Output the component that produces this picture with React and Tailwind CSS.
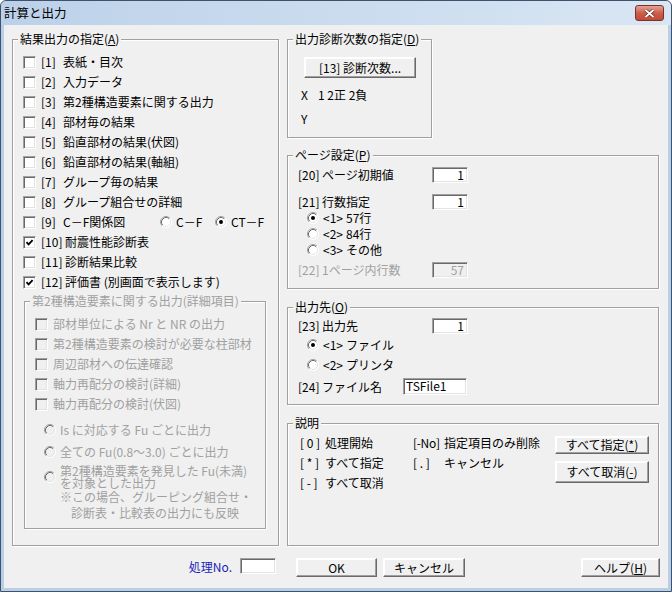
import React from "react";

const U = ({ children }) => (
  <span className="underline decoration-1 underline-offset-[1px]">{children}</span>
);

function Check({ checked, disabled }) {
  return (
    <span
      className={`relative flex items-center justify-center w-[13px] h-[13px] shrink-0 border border-t-[#a0a0a0] border-l-[#a0a0a0] border-r-white border-b-white shadow-[inset_1px_1px_0_#696969,inset_-1px_-1px_0_#e3e3e3] ${
        disabled ? "bg-[#f0f0f0]" : "bg-white"
      }`}
    >
      {checked && (
        <svg width="9" height="9" viewBox="0 0 9 9">
          <path d="M1.5 4.2 L3.6 6.4 L7.6 2.2" stroke="#000" strokeWidth="1.9" fill="none" />
        </svg>
      )}
    </span>
  );
}

function Radio({ checked, disabled }) {
  return (
    <svg width="12" height="12" viewBox="0 0 12 12" className="shrink-0">
      <circle cx="6" cy="6" r="5.5" fill={disabled ? "#f0f0f0" : "#fff"} />
      <path d="M2.11 9.89 A5.5 5.5 0 0 1 9.89 2.11" stroke="#a0a0a0" fill="none" />
      <path d="M2.82 9.18 A4.5 4.5 0 0 1 9.18 2.82" stroke="#696969" fill="none" />
      <path d="M9.89 2.11 A5.5 5.5 0 0 1 2.11 9.89" stroke="#fff" fill="none" />
      <path d="M9.18 2.82 A4.5 4.5 0 0 1 2.82 9.18" stroke="#e3e3e3" fill="none" />
      {checked && <circle cx="6" cy="6" r="2" fill="#000" />}
    </svg>
  );
}

function Btn({ className = "", children }) {
  return (
    <div
      className={`flex items-center justify-center bg-[#f0f0f0] border border-t-white border-l-white border-r-[#696969] border-b-[#696969] shadow-[inset_-1px_-1px_0_#a0a0a0,inset_1px_1px_0_#fff] leading-none whitespace-nowrap ${className}`}
    >
      {children}
    </div>
  );
}

function Field({ className = "", disabled, children }) {
  return (
    <div
      className={`h-[16px] border border-t-[#a0a0a0] border-l-[#a0a0a0] border-r-white border-b-white shadow-[inset_1px_1px_0_#696969,inset_-1px_-1px_0_#e3e3e3] leading-[14px] ${
        disabled ? "bg-[#f0f0f0] text-[#a0a0a0]" : "bg-white"
      } ${className}`}
    >
      {children}
    </div>
  );
}

function Group({ label, className = "", disabled, children }) {
  return (
    <div
      className={`relative border border-[#a0a0a0] shadow-[inset_1px_1px_0_#fff,1px_1px_0_#fff] ${className}`}
    >
      <span
        className={`absolute -top-[8px] left-[5px] px-[2px] bg-[#f0f0f0] leading-[14px] whitespace-nowrap ${
          disabled ? "text-[#a0a0a0]" : "text-black"
        }`}
      >
        {label}
      </span>
      {children}
    </div>
  );
}

const mainItems = [
  ["[1]", "表紙・目次"],
  ["[2]", "入力データ"],
  ["[3]", "第2種構造要素に関する出力"],
  ["[4]", "部材毎の結果"],
  ["[5]", "鉛直部材の結果(伏図)"],
  ["[6]", "鉛直部材の結果(軸組)"],
  ["[7]", "グループ毎の結果"],
  ["[8]", "グループ組合せの詳細"],
];

const lateItems = [
  ["[10]", "耐震性能診断表", true],
  ["[11]", "診断結果比較", false],
  ["[12]", "評価書 (別画面で表示します)", true],
];

const detailItems = [
  "部材単位による Nr と NR の出力",
  "第2種構造要素の検討が必要な柱部材",
  "周辺部材への伝達確認",
  "軸力再配分の検討(詳細)",
  "軸力再配分の検討(伏図)",
];

function Pre({ w, children }) {
  return <span className={`shrink-0 whitespace-nowrap ${w}`}>{children}</span>;
}

export default function App() {
  return (
    <div className="w-[672px] h-[592px] overflow-hidden bg-[#b9cfe7] border border-[#3e526b] rounded-t-[6px] font-['Noto_Sans_CJK_JP','Noto_Sans_CJK_SC',sans-serif] text-[12px] text-black">
      {/* title bar */}
      <div className="h-[24px] flex items-center bg-gradient-to-r from-[#bcd1e9] to-[#d9e6f4] rounded-t-[5px]">
        <span className="pl-[3px] text-[12.5px] leading-none">計算と出力</span>
        <div className="ml-auto mr-[7px] w-[29px] h-[16px] rounded-[3px] border border-[#7a3128] bg-gradient-to-b from-[#e3a396] via-[#cc5d4c] to-[#c24a36] flex items-center justify-center">
          <svg width="11" height="9" viewBox="0 0 11 9">
            <path d="M1.5 1 L9.5 8 M9.5 1 L1.5 8" stroke="#5a1f18" strokeWidth="3" />
            <path d="M1.5 1 L9.5 8 M9.5 1 L1.5 8" stroke="#fff" strokeWidth="1.8" />
          </svg>
        </div>
      </div>

      {/* client */}
      <div className="px-[3px]">
        <div className="h-[563px] bg-[#f0f0f0] px-[8px] pt-[14px]">
          <div className="flex gap-[8px]">
            {/* left group */}
            <Group
              label={<>結果出力の指定(<U>A</U>)</>}
              className="w-[267px] h-[507px] pt-[12px] pl-[10px]"
            >
              {mainItems.map(([n, t]) => (
                <div key={n} className="flex items-center h-[20px]">
                  <Check />
                  <Pre w="ml-[5px] w-[22px]">{n}</Pre>
                  <span>{t}</span>
                </div>
              ))}
              <div className="flex items-center h-[20px]">
                <Check />
                <Pre w="ml-[5px] w-[22px]">[9]</Pre>
                <span className="w-[97px]">C－F関係図</span>
                <Radio />
                <span className="ml-[4px] w-[39px]">C－F</span>
                <Radio checked />
                <span className="ml-[4px]">CT－F</span>
              </div>
              {lateItems.map(([n, t, c]) => (
                <div key={n} className="flex items-center h-[20px]">
                  <Check checked={c} />
                  <Pre w="ml-[5px] w-[24px]">{n}</Pre>
                  <span>{t}</span>
                </div>
              ))}

              {/* inner disabled group */}
              <Group
                disabled
                label="第2種構造要素に関する出力(詳細項目)"
                className="ml-[1px] mt-[9px] w-[242px] h-[228px] pt-[12px] pl-[10px] text-[#a0a0a0]"
              >
                {detailItems.map((t) => (
                  <div key={t} className="flex items-center h-[20px]">
                    <Check disabled />
                    <span className="ml-[5px]">{t}</span>
                  </div>
                ))}
                <div className="flex items-center h-[22px] mt-[5px] pl-[9px]">
                  <Radio disabled />
                  <span className="ml-[4px]">Is に対応する Fu ごとに出力</span>
                </div>
                <div className="flex items-center h-[22px] pl-[9px]">
                  <Radio disabled />
                  <span className="ml-[4px]">全ての Fu(0.8～3.0) ごとに出力</span>
                </div>
                <div className="flex items-center mt-[2px] pl-[9px]">
                  <Radio disabled />
                  <div className="ml-[4px] leading-[12px]">
                    <div>第2種構造要素を発見した Fu(未満)</div>
                    <div>を対象とした出力</div>
                  </div>
                </div>
                <div className="leading-[16px]">
                  <div className="ml-[25px]">※この場合、グルーピング組合せ・</div>
                  <div className="ml-[36px]">診断表・比較表の出力にも反映</div>
                </div>
              </Group>
            </Group>

            {/* right column */}
            <div className="w-[372px] flex flex-col">
              <Group
                label={<>出力診断次数の指定(<U>D</U>)</>}
                className="w-[145px] h-[99px] pt-[17px]"
              >
                <Btn className="ml-[16px] w-[112px] h-[21px]">[13] 診断次数...</Btn>
                <div className="mt-[9px] h-[16px] leading-[16px] pl-[13px] flex">
                  <span className="w-[17px]">X</span>
                  <span>1 2正 2負</span>
                </div>
                <div className="mt-[8px] h-[16px] leading-[16px] pl-[13px]">Y</div>
              </Group>

              <Group
                label={<>ページ設定(<U>P</U>)</>}
                className="mt-[17px] h-[134px] pt-[11px] pl-[10px]"
              >
                <div className="flex items-center h-[16px]">
                  <span className="w-[134px] flex">
                    <Pre w="w-[24px]">[20]</Pre>ページ初期値
                  </span>
                  <Field className="w-[36px] text-right pr-[3px]">1</Field>
                </div>
                <div className="flex items-center h-[16px] mt-[11px]">
                  <span className="w-[134px] flex">
                    <Pre w="w-[24px]">[21]</Pre>行数指定
                  </span>
                  <Field className="w-[36px] text-right pr-[3px]">1</Field>
                </div>
                <div className="pl-[9px]">
                  {[
                    ["<1>", "57行", true],
                    ["<2>", "84行", false],
                    ["<3>", "その他", false],
                  ].map(([a, b, c]) => (
                    <div key={a} className="flex items-center h-[16px]">
                      <Radio checked={c} />
                      <Pre w="ml-[4px] w-[23px]">{a}</Pre>
                      <span>{b}</span>
                    </div>
                  ))}
                </div>
                <div className="flex items-center h-[16px] mt-[4px] text-[#a0a0a0]">
                  <span className="w-[134px] flex">
                    <Pre w="w-[24px]">[22]</Pre>1ページ内行数
                  </span>
                  <Field disabled className="w-[36px] text-right pr-[3px]">57</Field>
                </div>
              </Group>

              <Group
                label={<>出力先(<U>O</U>)</>}
                className="mt-[18px] h-[98px] pt-[10px] pl-[10px]"
              >
                <div className="flex items-center h-[16px]">
                  <span className="w-[134px] flex">
                    <Pre w="w-[24px]">[23]</Pre>出力先
                  </span>
                  <Field className="w-[36px] text-right pr-[3px]">1</Field>
                </div>
                <div className="mt-[1px] pl-[9px]">
                  {[
                    ["<1>", "ファイル", true],
                    ["<2>", "プリンタ", false],
                  ].map(([a, b, c]) => (
                    <div key={a} className="flex items-center h-[20px]">
                      <Radio checked={c} />
                      <Pre w="ml-[4px] w-[23px]">{a}</Pre>
                      <span>{b}</span>
                    </div>
                  ))}
                </div>
                <div className="flex items-center h-[17px] mt-[3px]">
                  <span className="w-[105px] flex">
                    <Pre w="w-[24px]">[24]</Pre>ファイル名
                  </span>
                  <Field className="w-[64px] h-[17px] pl-[2px]">TSFile1</Field>
                </div>
              </Group>

              <Group label="説明" className="mt-[18px] h-[123px] pt-[9px] flex">
                <div className="pl-[12px] grid grid-cols-[113px_auto] auto-rows-[20px] items-center whitespace-nowrap">
                  <span className="flex"><Pre w="w-[25px]">[ 0 ]</Pre>処理開始</span>
                  <span className="flex"><Pre w="w-[31px] tracking-[-0.3px]">[-No]</Pre>指定項目のみ削除</span>
                  <span className="flex"><Pre w="w-[25px]">[ * ]</Pre>すべて指定</span>
                  <span className="flex"><Pre w="w-[31px]">[ . ]</Pre>キャンセル</span>
                  <span className="flex"><Pre w="w-[25px]">[ - ]</Pre>すべて取消</span>
                </div>
                <div className="ml-auto mr-[9px] mt-[3px] flex flex-col">
                  <Btn className="w-[94px] h-[18px]">すべて指定(<U>*</U>)</Btn>
                  <Btn className="w-[94px] h-[22px] mt-[7px]">すべて取消(<U>-</U>)</Btn>
                </div>
              </Group>
            </div>
          </div>

          {/* bottom bar */}
          <div className="mt-[12px] flex items-start">
            <span className="w-[220px] text-right leading-[17px] text-[#1c1cb8]">処理No.</span>
            <Field className="ml-[8px] w-[36px]" />
            <Btn className="ml-[20px] w-[81px] h-[19px]">OK</Btn>
            <Btn className="ml-[6px] w-[82px] h-[19px]">キャンセル</Btn>
            <Btn className="ml-auto w-[79px] h-[19px]">ヘルプ(<U>H</U>)</Btn>
          </div>
        </div>
      </div>
    </div>
  );
}
